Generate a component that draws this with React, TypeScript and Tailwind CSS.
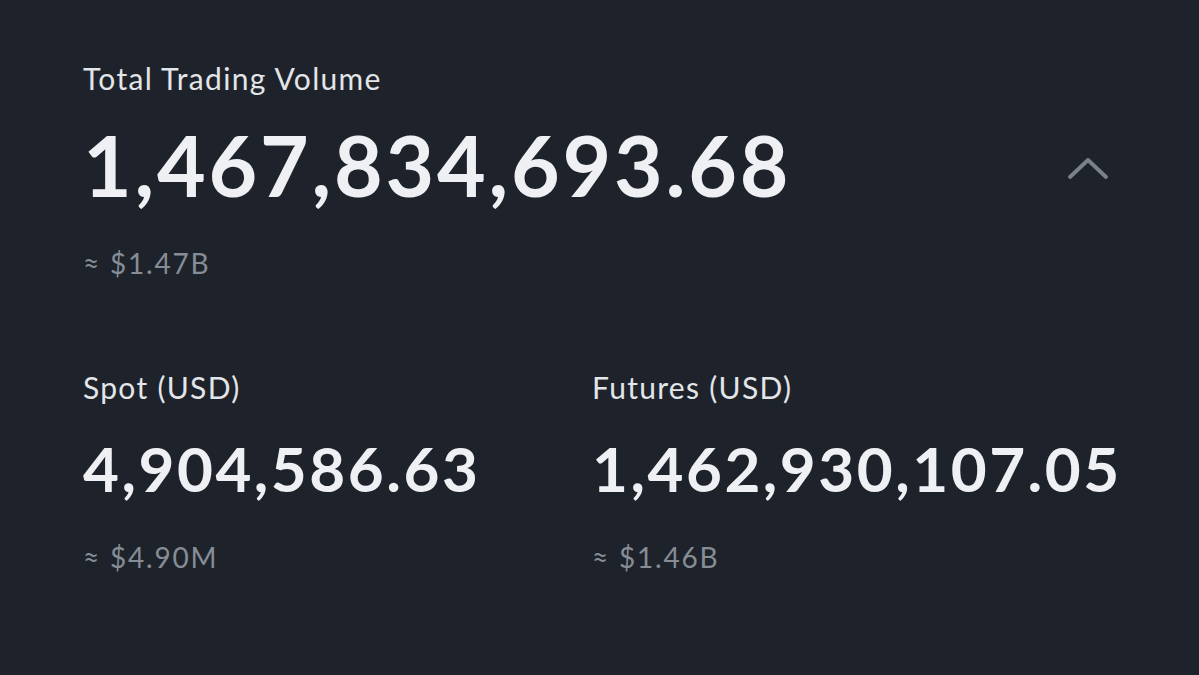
const font = { fontFamily: 'Lato, "Noto Sans", sans-serif' }

function Stat({ label, value, approx }: { label: string; value: string; approx: string }) {
  return (
    <div>
      <p className="text-[30px] leading-[36px] text-[#e3e5e9] tracking-[1.3px]">{label}</p>
      <p className="mt-[32px] text-[62px] leading-[62px] font-bold text-[#eef0f3] tracking-[2.5px]">{value}</p>
      <p className="mt-[42px] text-[28px] leading-[32px] text-[#878d96] tracking-[1.8px]">{approx}</p>
    </div>
  )
}

export default function App() {
  return (
    <div className="w-[1199px] h-[675px] bg-[#1e232b] overflow-hidden" style={font}>
      <div className="pl-[83px] pt-[60px]">
        <p className="text-[30px] leading-[36px] text-[#e3e5e9] tracking-[1.3px]">Total Trading Volume</p>
        <div className="mt-[27px] flex items-center justify-between pr-[90px]">
          <p className="text-[84px] leading-[84px] font-bold text-[#eef0f3] tracking-[2.8px]">1,467,834,693.68</p>
          <svg width="42" height="26" viewBox="0 0 42 26" fill="none" className="mt-[8px]">
            <path d="M3 21 L21 4 L39 21" stroke="#7b818b" strokeWidth="3.8" strokeLinecap="round" strokeLinejoin="round" />
          </svg>
        </div>
        <p className="mt-[40px] text-[28px] leading-[32px] text-[#878d96] tracking-[1.8px]">≈ $1.47B</p>

        <div className="mt-[90px] grid grid-cols-[509px_1fr]">
          <Stat label="Spot (USD)" value="4,904,586.63" approx="≈ $4.90M" />
          <Stat label="Futures (USD)" value="1,462,930,107.05" approx="≈ $1.46B" />
        </div>
      </div>
    </div>
  )
}
